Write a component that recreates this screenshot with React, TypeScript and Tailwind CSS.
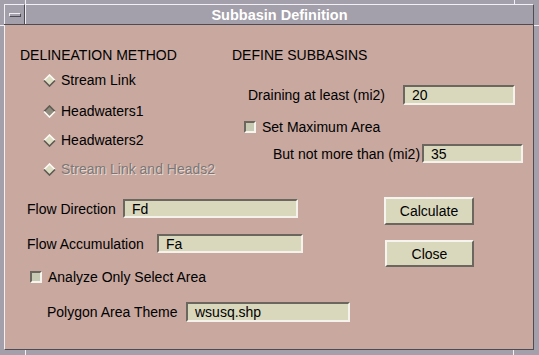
import React from "react";

const field =
  "flex items-center border-2 border-t-[#6b675f] border-l-[#6b675f] border-b-[#f4f2ea] border-r-[#f4f2ea] bg-[#d9d8bd] pl-[7px] text-[14px] leading-[16px] text-black";

const button =
  "flex items-center justify-center border-2 border-t-[#f6f4ee] border-l-[#f6f4ee] border-b-[#6b675f] border-r-[#6b675f] bg-[#d9d8bd] text-[14px] text-black";

function Diamond({ selected }: { selected?: boolean }) {
  return (
    <svg width="13" height="13" viewBox="0 0 13 13" className="shrink-0">
      <polygon
        points="6.5,1 12,6.5 6.5,12 1,6.5"
        fill={selected ? "#8f8c7e" : "#dcdcc2"}
      />
      <polyline
        points="1,6.5 6.5,1 12,6.5"
        fill="none"
        stroke={selected ? "#5e5a52" : "#fbfaf4"}
        strokeWidth="1.6"
      />
      <polyline
        points="1,6.5 6.5,12 12,6.5"
        fill="none"
        stroke={selected ? "#fbfaf4" : "#5e5a52"}
        strokeWidth="1.6"
      />
    </svg>
  );
}

function Check() {
  return (
    <div className="h-[12px] w-[12px] shrink-0 border-2 border-t-[#6b675f] border-l-[#6b675f] border-b-[#f6f4ee] border-r-[#f6f4ee] bg-[#c9cab3]" />
  );
}

function Radio({
  label,
  selected,
  disabled,
  mt,
}: {
  label: string;
  selected?: boolean;
  disabled?: boolean;
  mt: string;
}) {
  return (
    <div className={`${mt} ml-[23px] flex h-[16px] items-center gap-[5px]`}>
      <Diamond selected={selected} />
      <span
        className={
          disabled
            ? "text-[#7e7674] [text-shadow:1px_1px_0_#e6dcd6]"
            : "text-black"
        }
      >
        {label}
      </span>
    </div>
  );
}

export default function App() {
  return (
    <div className="relative flex h-[355px] w-[539px] flex-col bg-[#a4a0ab] pt-[4px] pb-[5px] pl-[4px] pr-[5px] font-['Liberation_Sans',Arial,sans-serif] text-[14px] leading-[16px]">
      {/* resize corner ticks */}
      <div className="absolute left-[25px] top-0 h-[4px] w-px bg-[#f2f0f4]" />
      <div className="absolute left-[514px] top-0 h-[4px] w-px bg-[#f2f0f4]" />
      <div className="absolute left-0 top-[25px] h-px w-[4px] bg-[#f2f0f4]" />
      <div className="absolute right-0 top-[25px] h-px w-[5px] bg-[#f2f0f4]" />
      <div className="absolute bottom-0 left-[25px] h-[5px] w-px bg-[#f2f0f4]" />
      <div className="absolute bottom-0 left-[513px] h-[5px] w-px bg-[#f2f0f4]" />

      <div className="flex h-[21px] border-b border-[#4e4b55]">
        <div className="flex w-[21px] items-center justify-center border-t border-l border-r border-t-[#f2f0f4] border-l-[#f2f0f4] border-r-[#4e4b55]">
          <div className="h-[4px] w-[12px] border border-t-[#f2f0f4] border-l-[#f2f0f4] border-b-[#4e4b55] border-r-[#4e4b55]" />
        </div>
        <div className="flex flex-1 items-center justify-center border-t border-l border-r border-t-[#f2f0f4] border-l-[#f2f0f4] border-r-[#4e4b55] text-[14.5px] font-bold text-white">
          Subbasin Definition
        </div>
      </div>

      <div className="flex flex-1 flex-col border-l border-b border-r border-l-[#f2f0f4] border-b-[#4e4b55] border-r-[#4e4b55] bg-[#c8a89f] text-black">
        {/* top section */}
        <div className="flex h-[152px]">
          <div className="flex w-[227px] flex-col pl-[15px]">
            <div className="mt-[22px] h-[16px]">DELINEATION METHOD</div>
            <Radio mt="mt-[9px]" label="Stream Link" />
            <Radio mt="mt-[15px]" label="Headwaters1" selected />
            <Radio mt="mt-[13px]" label="Headwaters2" />
            <Radio mt="mt-[13px]" label="Stream Link and Heads2" disabled />
          </div>
          <div className="flex flex-1 flex-col">
            <div className="mt-[22px] h-[16px]">DEFINE SUBBASINS</div>
            <div className="mt-[22px] ml-[16px] flex h-[20px] items-center">
              <span className="w-[155px]">Draining at least (mi2)</span>
              <div className={`${field} h-[20px] w-[112px]`}>20</div>
            </div>
            <div className="mt-[14px] ml-[12px] flex h-[16px] items-center gap-[6px]">
              <Check />
              <span>Set Maximum Area</span>
            </div>
            <div className="mt-[9px] ml-[41px] flex h-[19px] items-center">
              <span className="w-[149px]">But not more than (mi2)</span>
              <div className={`${field} h-[19px] w-[101px]`}>35</div>
            </div>
          </div>
        </div>

        {/* bottom section */}
        <div className="flex">
          <div className="flex w-[379px] flex-col pl-[22px]">
            <div className="mt-[22px] flex h-[19px] items-center">
              <span className="w-[96px]">Flow Direction</span>
              <div className={`${field} h-[19px] w-[175px]`}>Fd</div>
            </div>
            <div className="mt-[16px] flex h-[19px] items-center">
              <span className="w-[130px]">Flow Accumulation</span>
              <div className={`${field} h-[19px] w-[146px]`}>Fa</div>
            </div>
            <div className="mt-[16px] ml-[3px] flex h-[16px] items-center gap-[6px]">
              <Check />
              <span>Analyze Only Select Area</span>
            </div>
            <div className="mt-[17px] ml-[20px] flex h-[20px] items-center">
              <span className="w-[139px]">Polygon Area Theme</span>
              <div className={`${field} h-[20px] w-[164px]`}>wsusq.shp</div>
            </div>
          </div>
          <div className="flex flex-col">
            <div className={`${button} mt-[20px] h-[28px] w-[90px]`}>Calculate</div>
            <div className={`${button} mt-[15px] ml-[1px] h-[27px] w-[89px]`}>Close</div>
          </div>
        </div>
      </div>
    </div>
  );
}
